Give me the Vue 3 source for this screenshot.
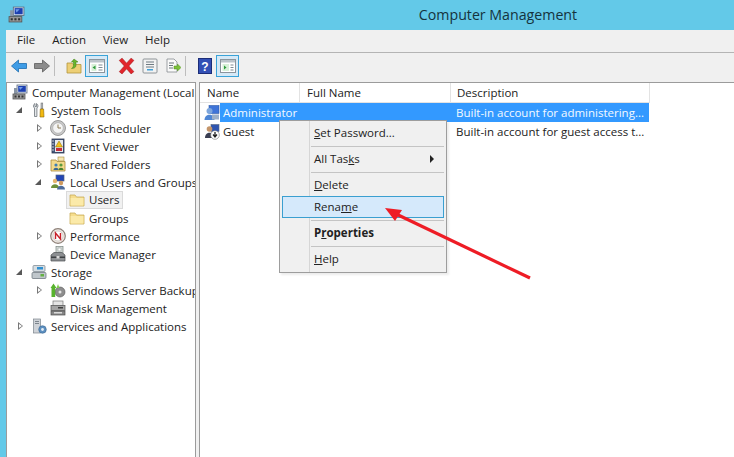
<script setup>
const icons = {
  computer: '<rect x="5" y="1" width="10" height="8" fill="#dfe6f0" stroke="#5a6a80" stroke-width=".8"/><rect x="6.2" y="2" width="7.6" height="5.8" fill="#1c3fb0"/><path d="M7 3l4 0-3 3z" fill="#6f9be8"/><rect x="2" y="4" width="3" height="6" fill="#8a96a5"/><rect x="1" y="10" width="12" height="5" fill="#9a9a9a" stroke="#555" stroke-width=".8"/><rect x="2.5" y="11.5" width="2" height="2" fill="#333"/><rect x="6" y="11.5" width="2" height="2" fill="#333"/><rect x="9.5" y="11.5" width="2" height="2" fill="#333"/>',
  tools: '<path d="M4 1.500c-2 1-2 3.500-.5 4.500v8.500h2.400V6c1.500-1 1.500-3.500-.4-4.500v3H4z" fill="#e4e7ea" stroke="#6d737a" stroke-width=".8"/><rect x="10" y="1" width="1.800" height="6" fill="#b8bec4" stroke="#666" stroke-width=".5"/><path d="M9.300 7h3.300l.4 8h-4z" fill="#f2b90f" stroke="#8a6500" stroke-width=".6"/>',
  clock: '<circle cx="8" cy="8" r="7.500" fill="#c9c9c9" stroke="#888" stroke-width=".8"/><circle cx="8" cy="8" r="5.300" fill="#f4f4f4" stroke="#a5a5a5" stroke-width=".6"/><path d="M8 4.500V8h3" fill="none" stroke="#8b7a55" stroke-width="1"/>',
  event: '<rect x="2" y="1" width="12" height="14" fill="#46577a" stroke="#2d3850" stroke-width=".8"/><rect x="5" y="2" width="8" height="12" fill="#e7e9ee"/><path d="M2 3h2M2 6h2M2 9h2M2 12h2" stroke="#c5cad3"/><path d="M9 3l3.500 6h-7z" fill="#f2c21b" stroke="#8b6b00" stroke-width=".5"/><rect x="6" y="10" width="6" height="3" fill="#c42d3c"/>',
  shared: '<path d="M1 4h5l1 1.500h8V15H1z" fill="#f3d98a" stroke="#a98c3e" stroke-width=".8"/><rect x="8" y="1" width="6" height="4" fill="#f7e7b0" stroke="#a98c3e" stroke-width=".6"/><circle cx="6" cy="9" r="1.600" fill="#3f7fb5"/><path d="M3.500 14c0-3 5-3 5 0z" fill="#39668f"/><circle cx="11" cy="9" r="1.600" fill="#5a9a3f"/><path d="M8.500 14c0-3 5-3 5 0z" fill="#47802f"/>',
  group: '<rect x="6" y="1" width="8" height="6" fill="#2345b5" stroke="#53637d" stroke-width=".7"/><circle cx="5" cy="7" r="2.200" fill="#e6b46e"/><path d="M1 14c0-5 8-5 8 0z" fill="#6d8f3a"/><circle cx="11" cy="9" r="2.200" fill="#cf9a5e"/><path d="M7 15.500c0-5 8-5 8 0z" fill="#4d6c9c"/>',
  folder: '<path d="M1 3h5l1.500 2H15v9H1z" fill="#f6dd8c" stroke="#c9ad5b" stroke-width=".8"/><rect x="1.600" y="6" width="12.800" height="7.500" fill="#fbeaa9"/>',
  perf: '<circle cx="8" cy="8" r="7.300" fill="#efe9e4" stroke="#8e8078" stroke-width="1.200"/><circle cx="8" cy="8" r="5" fill="#fff" stroke="#b5a9a1" stroke-width=".5"/><path d="M5.500 11V5l5 6V5" fill="none" stroke="#c71f28" stroke-width="1.400"/>',
  device: '<rect x="6" y="0.500" width="7" height="7" fill="#d6dcd9" stroke="#7c8682" stroke-width=".7"/><rect x="8" y="2" width="3" height="3" fill="#fff" stroke="#8d9592" stroke-width=".5"/><path d="M1 9l3-2.500h8L15 9v6H1z" fill="#8c8f92" stroke="#4c4f52" stroke-width=".7"/><rect x="1" y="10.500" width="14" height="1.500" fill="#3d4043"/><rect x="6.500" y="10" width="3" height="2.500" fill="#d9d9d9"/>',
  storage: '<rect x="2" y="1.500" width="12" height="6" rx="1" fill="#d5dde2" stroke="#74808a" stroke-width=".7"/><rect x="6" y="3" width="6" height="2.500" fill="#2f8fd0"/><rect x="1" y="8.500" width="14" height="6" rx="1" fill="#bfc6cb" stroke="#636d75" stroke-width=".7"/><rect x="9.500" y="10" width="3.500" height="2.500" fill="#64b043"/>',
  backup: '<circle cx="10" cy="10" r="5" fill="#8e8e8e" stroke="#555" stroke-width=".6"/><circle cx="10" cy="10" r="1.500" fill="#e6e6e6"/><path d="M1.500 15V6L0.500 6 3.500 1.500 6.500 6H5.200V15z" fill="#58b32e"/><path d="M8 2l1.500 4h-3z" fill="#7ccc4d"/>',
  disk: '<rect x="3" y="1" width="10" height="5" fill="#e5e5e5" stroke="#777" stroke-width=".7"/><rect x="1" y="5.500" width="14" height="5" fill="#a4a4a4" stroke="#555" stroke-width=".7"/><rect x="8" y="7" width="5" height="1.500" fill="#3e3e3e"/><rect x="1" y="11" width="14" height="4" fill="#878787" stroke="#4d4d4d" stroke-width=".7"/><rect x="4" y="12.200" width="8" height="1.200" fill="#efefef"/>',
  services: '<rect x="2.500" y="1" width="7" height="14" fill="#cfd3d8" stroke="#7d858d" stroke-width=".7"/><rect x="4" y="3" width="4" height="1" fill="#7d858d"/><rect x="4" y="5" width="4" height="1" fill="#7d858d"/><circle cx="11.500" cy="11.500" r="3.800" fill="#5c8fc0" stroke="#3a6790" stroke-width=".6"/><circle cx="11.500" cy="11.500" r="1.400" fill="#e3edf5"/>',
  admin: '<rect x="5" y="0.500" width="10" height="8" fill="#3f74d8" stroke="#2d5ba8" stroke-width=".6"/><circle cx="5.500" cy="6" r="3" fill="#7da6dd"/><path d="M0.500 15c0-7 10-7 10 0z" fill="#4f86d4"/><rect x="8" y="9.500" width="7" height="5" fill="#9cb0c9"/>',
  guest: '<rect x="7" y="0.500" width="8" height="7" fill="#2f55b0" stroke="#5a6a80" stroke-width=".6"/><circle cx="5.500" cy="5" r="2.800" fill="#c4956a"/><path d="M1 14c0-7 9-7 9 0z" fill="#3a3f52"/><circle cx="11" cy="11" r="4.300" fill="#fff" stroke="#777" stroke-width=".6"/><path d="M11 8v4.500M9 10.500l2 2.500 2-2.500" fill="none" stroke="#222" stroke-width="1.300"/>'
}

const tools = [
  { id: 'back', svg: '<path d="M0.500 8L7.500 2v3.500h8v5h-8V14z" fill="#3e9ce6" stroke="#1c6db0" stroke-width=".8"/>' },
  { id: 'fwd', svg: '<path d="M15.500 8L8.500 2v3.500h-8v5h8V14z" fill="#8b8b8b" stroke="#5c5c5c" stroke-width=".8"/>' },
  { sep: true, id: 's1' },
  { id: 'up', svg: '<path d="M1 5h5l1 1.500h8V15H1z" fill="#edcf75" stroke="#b3963c" stroke-width=".8"/><path d="M8 1l4 3h-2v3.500c0 2-2 3-4.500 3 1.500-1 2-2 2-3.500V4H5.500z" fill="#69b52d" stroke="#3f7f12" stroke-width=".5"/>' },
  { id: 'tree', box: true, svg: '<rect x="0.500" y="1.500" width="15" height="13" fill="#fff" stroke="#8c959c"/><rect x="1" y="2" width="14" height="2.500" fill="#bcc4ca"/><rect x="2.500" y="6" width="5" height="7" fill="#d8f0d8"/><path d="M6.500 7.500v4L3.500 9.500z" fill="#2f9a3c"/><path d="M9.500 7h4M9.500 9.500h4M9.500 12h4" stroke="#7f8a92"/>' },
  { id: 'del', gap: true, svg: '<path d="M2.500 3.500L5 1.500 9 6l4-4.500 2.500 2L11 8.500l4.500 5L13 15.500 9 11l-4 4.500-2.500-2L7 8.500z" transform="translate(-.5 -.5)" fill="#e2252b" stroke="#a11217" stroke-width=".5"/>' },
  { id: 'props', svg: '<rect x="1" y="1" width="14" height="14" rx="1" fill="#f2f2f2" stroke="#8e9498"/><path d="M4 4h8M4 6.500h8M4 9h8" stroke="#6f7a82"/><rect x="5" y="11" width="6" height="1.500" fill="#3fa0d8"/>' },
  { id: 'export', svg: '<path d="M2 1h7l3 3v10H2z" fill="#fafafa" stroke="#868c90" stroke-width=".8"/><path d="M4 5h5M4 7.500h4M4 10h4" stroke="#6a747b"/><path d="M9 8h3.500V6L16 9.500 12.500 13v-2H9z" fill="#7cc23b" stroke="#4c8a1a" stroke-width=".5"/>' },
  { sep: true, id: 's2' },
  { id: 'help', svg: '<rect x="1.500" y="0.500" width="13" height="15" fill="#3350b5" stroke="#1c2d78"/><text x="8" y="12.500" text-anchor="middle" font-family="Liberation Sans" font-weight="700" font-size="12" fill="#fff">?</text>' },
  { id: 'action', box: true, svg: '<rect x="0.500" y="1.500" width="15" height="13" fill="#fff" stroke="#8c959c"/><rect x="1" y="2" width="14" height="2.500" fill="#bcc4ca"/><rect x="2.500" y="6" width="6.500" height="7" fill="#d8f0d8"/><path d="M4 7.500v4l2.500-2z" fill="#2f9a3c"/><path d="M10.500 7h3M10.500 9.500h3M10.500 12h3" stroke="#7f8a92"/>' }
]

const tree = [
  { lvl: 0, icon: 'computer', label: 'Computer Management (Local' },
  { lvl: 1, exp: 'open', icon: 'tools', label: 'System Tools' },
  { lvl: 2, exp: 'closed', icon: 'clock', label: 'Task Scheduler' },
  { lvl: 2, exp: 'closed', icon: 'event', label: 'Event Viewer' },
  { lvl: 2, exp: 'closed', icon: 'shared', label: 'Shared Folders' },
  { lvl: 2, exp: 'open', icon: 'group', label: 'Local Users and Groups' },
  { lvl: 3, icon: 'folder', label: 'Users', selected: true },
  { lvl: 3, icon: 'folder', label: 'Groups' },
  { lvl: 2, exp: 'closed', icon: 'perf', label: 'Performance' },
  { lvl: 2, icon: 'device', label: 'Device Manager' },
  { lvl: 1, exp: 'open', icon: 'storage', label: 'Storage' },
  { lvl: 2, exp: 'closed', icon: 'backup', label: 'Windows Server Backup' },
  { lvl: 2, icon: 'disk', label: 'Disk Management' },
  { lvl: 1, exp: 'closed', icon: 'services', label: 'Services and Applications' }
]
</script>

<template>
  <div class="win">
    <header class="title">
      <svg class="title-icon" viewBox="0 0 16 16" v-html="icons.computer"></svg>
      <span class="title-text">Computer Management</span>
    </header>
    <div class="body">
      <nav class="menubar">
        <span>File</span><span>Action</span><span>View</span><span>Help</span>
      </nav>
      <div class="toolbar">
        <template v-for="t in tools" :key="t.id">
          <i v-if="t.sep" class="tsep"></i>
          <span v-else-if="t.box" class="tbox"><svg viewBox="0 0 16 16" v-html="t.svg"></svg></span>
          <svg v-else class="tico" :class="{ gap: t.gap }" viewBox="0 0 16 16" v-html="t.svg"></svg>
        </template>
      </div>
      <div class="panes">
        <aside class="tree">
          <div v-for="n in tree" :key="n.label" class="node" :class="'l' + n.lvl">
            <span v-if="n.lvl > 0" class="exp" :class="n.exp"></span>
            <svg class="nico" viewBox="0 0 16 16" v-html="icons[n.icon]"></svg>
            <span class="nlabel" :class="{ sel: n.selected }">{{ n.label }}</span>
          </div>
        </aside>
        <section class="list">
          <div class="head">
            <span class="c1">Name</span><span class="c2">Full Name</span><span class="c3">Description</span>
          </div>
          <div class="row">
            <svg class="nico" viewBox="0 0 16 16" v-html="icons.admin"></svg>
            <div class="rowfill selrow">
              <span class="rname">Administrator</span>
              <span class="rdesc">Built-in account for administering...</span>
            </div>
          </div>
          <div class="row">
            <svg class="nico" viewBox="0 0 16 16" v-html="icons.guest"></svg>
            <div class="rowfill">
              <span class="rname">Guest</span>
              <span class="rdesc">Built-in account for guest access t...</span>
            </div>
          </div>
        </section>
      </div>
    </div>

    <div class="menu">
      <div class="mi"><u>S</u>et Password...</div>
      <div class="ms"></div>
      <div class="mi sub">All Tas<u>k</u>s<i class="caret"></i></div>
      <div class="ms"></div>
      <div class="mi"><u>D</u>elete</div>
      <div class="mi hot">Rena<u>m</u>e</div>
      <div class="ms"></div>
      <div class="mi bold">P<u>r</u>operties</div>
      <div class="ms"></div>
      <div class="mi"><u>H</u>elp</div>
    </div>

    <svg class="arrow" viewBox="0 0 734 457">
      <path d="M530 278L394 213" stroke="#ee1c25" stroke-width="3.200" fill="none"/>
      <path d="M385 208L402 210 395 221z" fill="#ee1c25"/>
    </svg>
  </div>
</template>

<style scoped>
.win {
  position: relative;
  width: 734px;
  height: 457px;
  overflow: hidden;
  background: #63c9e8;
  font-family: "Open Sans", "Noto Sans", sans-serif;
  font-size: 11.5px;
  color: #222;
  display: flex;
  flex-direction: column;
}
.title {
  height: 30px;
  flex: none;
  display: flex;
  align-items: center;
  justify-content: center;
  position: relative;
}
.title-icon {
  position: absolute;
  left: 8px;
  top: 6px;
  width: 17px;
  height: 17px;
}
.title-text {
  font-size: 14.200px;
  line-height: 28px;
  margin-bottom: 1px;
  color: #15333d;
  margin-left: 262px;
}
.body {
  flex: 1;
  margin-left: 6px;
  background: #f0f0f0;
  display: flex;
  flex-direction: column;
  min-height: 0;
}
.menubar {
  height: 23px;
  flex: none;
  box-sizing: border-box;
  display: flex;
  align-items: center;
  padding: 0 0 3px 11px;
  gap: 17px;
  border-bottom: 1px solid #b4b4b4;
}
.toolbar {
  height: 29px;
  flex: none;
  box-sizing: border-box;
  display: flex;
  align-items: center;
  padding: 0 0 4px 5px;
}
.tico {
  width: 16px;
  height: 16px;
  margin-right: 7px;
}
.tico.gap {
  width: 18px;
  height: 18px;
  margin-left: 9px;
}
.tsep {
  width: 1px;
  height: 20px;
  background: #bdbdbd;
  margin: 0 11px 0 -3px;
}
.tbox {
  width: 23px;
  height: 22px;
  margin-left: -4px;
  box-sizing: border-box;
  border: 1px solid #3aa3d8;
  background: #d5e9f7;
  display: flex;
  align-items: center;
  justify-content: center;
}
.tbox svg {
  width: 16px;
  height: 16px;
}
.panes {
  flex: 1;
  display: flex;
  gap: 3px;
  min-height: 0;
}
.tree {
  width: 190px;
  flex: none;
  box-sizing: border-box;
  background: #fff;
  border: 1px solid #9b9b9b;
  border-bottom: 0;
  overflow: hidden;
}
.node {
  height: 18px;
  display: flex;
  align-items: center;
  white-space: nowrap;
}
.l0 { padding-left: 5px; }
.l1 { padding-left: 7px; }
.l2 { padding-left: 26px; }
.l3 { padding-left: 45px; }
.exp {
  width: 12px;
  height: 12px;
  margin-right: 5px;
  flex: none;
  position: relative;
}
.exp.closed::before {
  content: "";
  position: absolute;
  left: 4px;
  top: 2px;
  border-left: 5px solid #777;
  border-top: 4px solid transparent;
  border-bottom: 4px solid transparent;
}
.exp.closed::after {
  content: "";
  position: absolute;
  left: 5px;
  top: 3.500px;
  border-left: 3px solid #fff;
  border-top: 2.500px solid transparent;
  border-bottom: 2.500px solid transparent;
}
.exp.open::before {
  content: "";
  position: absolute;
  left: 2px;
  top: 3px;
  border-right: 6px solid #595959;
  border-top: 6px solid transparent;
}
.nico {
  width: 16px;
  height: 16px;
  flex: none;
  margin-right: 4px;
}
.sel {
  background: #f1f1f1;
  border: 1px solid #dadada;
  margin: 0 0 0 -23px;
  padding: 0 2px 0 22px;
  height: 18px;
  line-height: 16px;
  box-sizing: border-box;
}
.l3:has(.sel) .nico {
  position: relative;
  z-index: 1;
}
.list {
  flex: 1;
  box-sizing: border-box;
  background: #fff;
  border: 1px solid #9b9b9b;
  border-right: 0;
  border-bottom: 0;
}
.head {
  height: 20px;
  display: flex;
  align-items: center;
  width: 450px;
  border-right: 1px solid #e3e3e3;
  border-bottom: 1px solid #e3e3e3;
  box-sizing: border-box;
}
.head span {
  height: 100%;
  display: flex;
  align-items: center;
  padding-left: 6px;
  box-sizing: border-box;
}
.head .c1, .head .c2 { padding-left: 7px; }
.c1 { width: 100px; border-right: 1px solid #e3e3e3; }
.c2 { width: 151px; border-right: 1px solid #e3e3e3; }
.c3 { flex: 1; }
.row {
  height: 19px;
  display: flex;
  align-items: center;
  padding-left: 4px;
}
.row .nico { margin-right: 0; }
.rowfill {
  width: 429px;
  height: 100%;
  display: flex;
  align-items: center;
  white-space: nowrap;
  padding-left: 3px;
  box-sizing: border-box;
}
.selrow {
  background: #3399ff;
  color: #f4faff;
}
.rname { width: 233px; flex: none; }
.menu {
  position: absolute;
  left: 279px;
  top: 120px;
  width: 168px;
  height: 153px;
  box-sizing: border-box;
  background: #f0f0f0;
  border: 1px solid #9d9d9d;
  padding: 1px 2px;
  box-shadow: 2px 2px 2px rgba(0, 0, 0, 0.08);
  background-image: linear-gradient(#d6d6d6, #d6d6d6);
  background-repeat: no-repeat;
  background-size: 1px 100%;
  background-position: 29px 0;
}
.mi {
  height: 22px;
  line-height: 22px;
  padding-left: 32px;
  box-sizing: border-box;
  position: relative;
}
.mi.hot {
  background: #d5e9fb;
  border: 1px solid #3a9fd0;
  line-height: 20px;
  padding-left: 31px;
}
.mi.bold { font-weight: 700; }
.ms {
  height: 1px;
  margin: 2px 0 1px 29px;
  background: #c4c4c4;
}
.caret {
  position: absolute;
  right: 10px;
  top: 7px;
  border-left: 4px solid #222;
  border-top: 4px solid transparent;
  border-bottom: 4px solid transparent;
}
.arrow {
  position: absolute;
  left: 0;
  top: 0;
  width: 734px;
  height: 457px;
  pointer-events: none;
}
</style>
